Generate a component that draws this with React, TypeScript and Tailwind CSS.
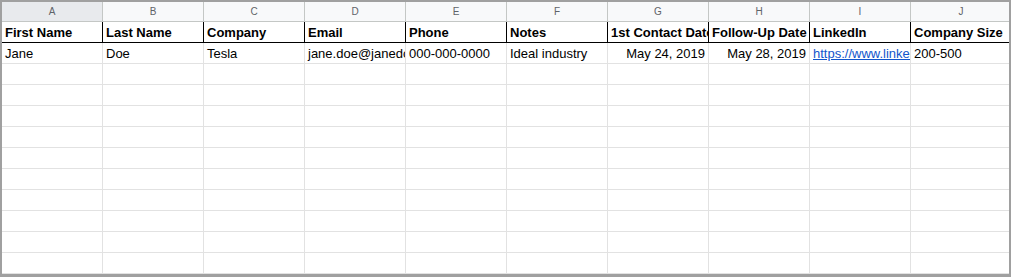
import React from "react";

const letters = ["A", "B", "C", "D", "E", "F", "G", "H", "I", "J"];
const headers = [
  "First Name",
  "Last Name",
  "Company",
  "Email",
  "Phone",
  "Notes",
  "1st Contact Date",
  "Follow-Up Date",
  "LinkedIn",
  "Company Size",
];

type Cell = { t: string; right?: boolean; link?: boolean };
const row2: Cell[] = [
  { t: "Jane" },
  { t: "Doe" },
  { t: "Tesla" },
  { t: "jane.doe@janedoe.com" },
  { t: "000-000-0000" },
  { t: "Ideal industry" },
  { t: "May 24, 2019", right: true },
  { t: "May 28, 2019", right: true },
  { t: "https://www.linkedin.com/in/janedoe", link: true },
  { t: "200-500" },
];

export default function App() {
  return (
    <div
      className="w-[1011px] h-[277px] border-l-2 border-t-2 border-r-2 border-b-[3px] border-[#a0a0a0] overflow-hidden bg-white"
      style={{ fontFamily: '"Liberation Sans", Arial, sans-serif' }}
    >
      <div className="grid grid-cols-[repeat(10,101px)] w-[1010px]">
        {letters.map((l, i) => (
          <div
            key={l}
            className={`h-[20px] border-r border-b border-[#c4c7c5] flex items-center justify-center text-[10px] text-[#5f6368] ${
              i === 0 ? "bg-[#e8eaed]" : "bg-[#f8f9fa]"
            }`}
          >
            {l}
          </div>
        ))}
        {headers.map((h) => (
          <div
            key={h}
            className="h-[21px] border-r border-b border-black px-[3px] pb-[2px] flex items-end overflow-hidden whitespace-nowrap text-[13px] leading-[15px] font-bold text-black"
          >
            {h}
          </div>
        ))}
        {row2.map((c, i) => (
          <div
            key={i}
            className={`h-[21px] border-r border-b border-[#e2e2e2] px-[3px] pb-[2px] flex items-end overflow-hidden whitespace-nowrap text-[13px] leading-[15px] text-black ${
              c.right ? "justify-end" : ""
            }`}
          >
            {c.link ? (
              <span className="text-[#1155cc] underline">{c.t}</span>
            ) : (
              c.t
            )}
          </div>
        ))}
        {Array.from({ length: 110 }).map((_, i) => (
          <div key={i} className="h-[21px] border-r border-b border-[#e2e2e2]" />
        ))}
      </div>
    </div>
  );
}
